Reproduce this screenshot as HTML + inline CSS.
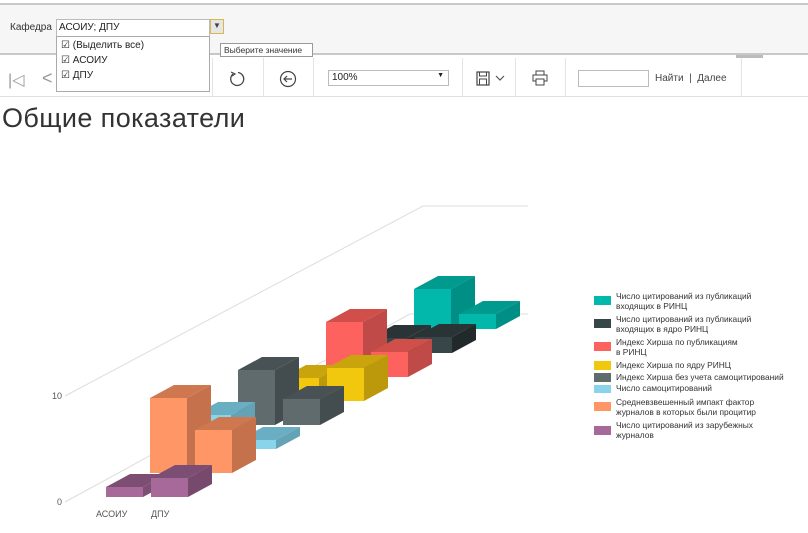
<!DOCTYPE html>
<html><head><meta charset="utf-8"><style>
*{margin:0;padding:0;box-sizing:border-box}
body{width:808px;height:533px;overflow:hidden;background:#fff;font-family:"Liberation Sans","DejaVu Sans",sans-serif;position:relative;color:#222}
.abs{position:absolute}
.sep{position:absolute;top:58px;width:1px;height:38px;background:#e4e4e4}
</style></head><body>
<div class="abs" style="left:0;top:3px;width:808px;height:52px;background:#f6f6f6;border-top:2px solid #c8c8c8;border-bottom:2px solid #c8c8c8"></div>
<div class="abs" style="left:10px;top:22px;font-size:10px;color:#333">Кафедра</div>
<div class="abs" style="left:56px;top:19px;width:154px;height:18px;border:1px solid #bbb;background:#fff;font-size:10px;padding:2px 2px;color:#222">АСОИУ; ДПУ</div>
<div class="abs" style="left:210px;top:19px;width:14px;height:15px;border:1px solid #d9b84a;background:#e6e6e6;font-size:8px;text-align:center;line-height:12px;color:#444">&#9660;</div>
<div class="abs" style="left:56px;top:36px;width:154px;height:56px;border:1px solid #aaa;background:#fff;font-size:10px;line-height:15px;padding:1px 4px">
<div>&#9745; (Выделить все)</div><div>&#9745; АСОИУ</div><div>&#9745; ДПУ</div></div>
<div class="abs" style="left:220px;top:43px;width:93px;height:14px;border:1px solid #999;background:#fff;font-size:8.5px;line-height:12px;padding-left:3px;color:#333">Выберите значение</div>
<div class="abs" style="left:0;top:96px;width:808px;height:1px;background:#e0e0e0"></div>
<div class="abs" style="left:8px;top:70px;font-size:16px;color:#999">|&#9665;</div>
<div class="abs" style="left:42px;top:68px;font-size:18px;color:#999">&lt;</div>
<div class="sep" style="left:212px"></div><div class="sep" style="left:263px"></div><div class="sep" style="left:313px"></div><div class="sep" style="left:462px"></div><div class="sep" style="left:515px"></div><div class="sep" style="left:565px"></div><div class="sep" style="left:741px"></div>
<svg class="abs" style="left:228px;top:70px" width="18" height="18" viewBox="0 0 18 18"><path d="M10 2.5 A6.5 6.5 0 1 1 5 4" fill="none" stroke="#444" stroke-width="1.3"/><path d="M3 2 L7 4 L4 6" fill="none" stroke="#444" stroke-width="1.2"/></svg>
<svg class="abs" style="left:279px;top:70px" width="18" height="18" viewBox="0 0 18 18"><circle cx="9" cy="9" r="7.5" fill="none" stroke="#444" stroke-width="1.2"/><path d="M13 9 H5 M8 6 L5 9 L8 12" fill="none" stroke="#444" stroke-width="1.2"/></svg>
<div class="abs" style="left:328px;top:70px;width:121px;height:16px;border:1px solid #bbb;font-size:10px;padding:1px 3px">100%<span style="position:absolute;right:4px;top:1px;font-size:7px">&#9660;</span></div>
<svg class="abs" style="left:476px;top:71px" width="14" height="15" viewBox="0 0 14 15"><rect x="1" y="1" width="12" height="13" fill="none" stroke="#444" stroke-width="1.2"/><rect x="3.5" y="1" width="7" height="4" fill="none" stroke="#444"/><rect x="3.5" y="8" width="7" height="6" fill="none" stroke="#444"/></svg>
<svg class="abs" style="left:495px;top:75px" width="10" height="7"><path d="M1 1 L5 5 L9 1" fill="none" stroke="#555" stroke-width="1.2"/></svg>
<svg class="abs" style="left:532px;top:70px" width="16" height="16" viewBox="0 0 16 16"><rect x="4" y="1" width="8" height="4" fill="none" stroke="#444"/><rect x="1" y="5" width="14" height="6" fill="none" stroke="#444"/><rect x="4" y="9" width="8" height="6" fill="#fff" stroke="#444"/></svg>
<div class="abs" style="left:578px;top:70px;width:71px;height:17px;border:1px solid #bbb"></div>
<div class="abs" style="left:655px;top:73px;font-size:10px;color:#444">Найти &nbsp;| &nbsp;Далее</div>
<div class="abs" style="left:736px;top:55px;width:27px;height:3px;background:#bbb"></div>
<div class="abs" style="left:2px;top:103px;font-size:27px;color:#333;letter-spacing:0.4px">Общие показатели</div>
<svg class="abs" style="left:0;top:0" width="808" height="533">
<g stroke="#ddd" stroke-width="1" fill="none">
<path d="M65 396 L423 206 L528 206"/>
<path d="M65 502 L410 314 L528 314"/>
</g>
<g font-size="9" fill="#555"><text x="52" y="399">10</text><text x="57" y="505">0</text><text x="96" y="517">АСОИУ</text><text x="151" y="517">ДПУ</text></g>
<g transform="translate(414,329)"><rect x="0" y="-40" width="37" height="40" fill="#01b8aa"/><polygon points="0,-40 24,-53 61,-53 37,-40" fill="#019a8e"/><polygon points="37,-40 61,-53 61,-13 37,0" fill="#008f84"/></g>
<g transform="translate(459,329)"><rect x="0" y="-15" width="37" height="15" fill="#01b8aa"/><polygon points="0,-15 24,-28 61,-28 37,-15" fill="#019a8e"/><polygon points="37,-15 61,-28 61,-13 37,0" fill="#008f84"/></g>
<g transform="translate(370,353)"><rect x="0" y="-15" width="37" height="15" fill="#374649"/><polygon points="0,-15 24,-28 61,-28 37,-15" fill="#2a3336"/><polygon points="37,-15 61,-28 61,-13 37,0" fill="#2a3336"/></g>
<g transform="translate(415,353)"><rect x="0" y="-16" width="37" height="16" fill="#374649"/><polygon points="0,-16 24,-29 61,-29 37,-16" fill="#2a3336"/><polygon points="37,-16 61,-29 61,-13 37,0" fill="#22292b"/></g>
<g transform="translate(326,377)"><rect x="0" y="-55" width="37" height="55" fill="#fd625e"/><polygon points="0,-55 24,-68 61,-68 37,-55" fill="#d04f4b"/><polygon points="37,-55 61,-68 61,-13 37,0" fill="#c04a47"/></g>
<g transform="translate(371,377)"><rect x="0" y="-25" width="37" height="25" fill="#fd625e"/><polygon points="0,-25 24,-38 61,-38 37,-25" fill="#d04f4b"/><polygon points="37,-25 61,-38 61,-13 37,0" fill="#c04a47"/></g>
<g transform="translate(282,401)"><rect x="0" y="-23" width="37" height="23" fill="#f2c80f"/><polygon points="0,-23 24,-36 61,-36 37,-23" fill="#c9a40c"/><polygon points="37,-23 61,-36 61,-13 37,0" fill="#bb990b"/></g>
<g transform="translate(327,401)"><rect x="0" y="-33" width="37" height="33" fill="#f2c80f"/><polygon points="0,-33 24,-46 61,-46 37,-33" fill="#c9a40c"/><polygon points="37,-33 61,-46 61,-13 37,0" fill="#bb990b"/></g>
<g transform="translate(238,425)"><rect x="0" y="-55" width="37" height="55" fill="#5f6b6d"/><polygon points="0,-55 24,-68 61,-68 37,-55" fill="#485254"/><polygon points="37,-55 61,-68 61,-13 37,0" fill="#434c4e"/></g>
<g transform="translate(283,425)"><rect x="0" y="-26" width="37" height="26" fill="#5f6b6d"/><polygon points="0,-26 24,-39 61,-39 37,-26" fill="#485254"/><polygon points="37,-26 61,-39 61,-13 37,0" fill="#434c4e"/></g>
<g transform="translate(194,449)"><rect x="0" y="-34" width="37" height="34" fill="#8ad4eb"/><polygon points="0,-34 24,-47 61,-47 37,-34" fill="#6aaec3"/><polygon points="37,-34 61,-47 61,-13 37,0" fill="#64a2b5"/></g>
<g transform="translate(239,449)"><rect x="0" y="-9" width="37" height="9" fill="#8ad4eb"/><polygon points="0,-9 24,-22 61,-22 37,-9" fill="#6aaec3"/><polygon points="37,-9 61,-22 61,-13 37,0" fill="#64a2b5"/></g>
<g transform="translate(150,473)"><rect x="0" y="-75" width="37" height="75" fill="#fe9666"/><polygon points="0,-75 24,-88 61,-88 37,-75" fill="#cf7850"/><polygon points="37,-75 61,-88 61,-13 37,0" fill="#c4714c"/></g>
<g transform="translate(195,473)"><rect x="0" y="-43" width="37" height="43" fill="#fe9666"/><polygon points="0,-43 24,-56 61,-56 37,-43" fill="#cf7850"/><polygon points="37,-43 61,-56 61,-13 37,0" fill="#c4714c"/></g>
<g transform="translate(106,497)"><rect x="0" y="-10" width="37" height="10" fill="#a66999"/><polygon points="0,-10 24,-23 61,-23 37,-10" fill="#7d4e73"/><polygon points="37,-10 61,-23 61,-13 37,0" fill="#7d4e73"/></g>
<g transform="translate(151,497)"><rect x="0" y="-19" width="37" height="19" fill="#a66999"/><polygon points="0,-19 24,-32 61,-32 37,-19" fill="#7d4e73"/><polygon points="37,-19 61,-32 61,-13 37,0" fill="#774a6d"/></g>
<g font-size="8.4" fill="#333">
<rect x="594" y="296" width="17" height="9" fill="#01b8aa"/><text x="616" y="299">Число цитирований из публикаций</text><text x="616" y="309">входящих в РИНЦ</text>
<rect x="594" y="319" width="17" height="9" fill="#374649"/><text x="616" y="322">Число цитирований из публикаций</text><text x="616" y="332">входящих в ядро РИНЦ</text>
<rect x="594" y="342" width="17" height="9" fill="#fd625e"/><text x="616" y="345">Индекс Хирша по публикациям</text><text x="616" y="355">в РИНЦ</text>
<rect x="594" y="361" width="17" height="9" fill="#f2c80f"/><text x="616" y="368">Индекс Хирша по ядру РИНЦ</text>
<rect x="594" y="373" width="17" height="9" fill="#5f6b6d"/><text x="616" y="380">Индекс Хирша без учета самоцитирований</text>
<rect x="594" y="385" width="17" height="8" fill="#8ad4eb"/><text x="616" y="391">Число самоцитирований</text>
<rect x="594" y="402" width="17" height="9" fill="#fe9666"/><text x="616" y="405">Средневзвешенный импакт фактор</text><text x="616" y="415">журналов в которых были процитир</text>
<rect x="594" y="426" width="17" height="9" fill="#a66999"/><text x="616" y="428">Число цитирований из зарубежных</text><text x="616" y="438">журналов</text>
</g>
</svg>
</body></html>
